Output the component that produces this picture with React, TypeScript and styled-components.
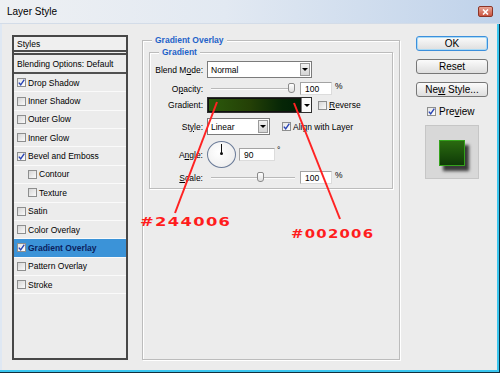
import React from "react";
import styled, { createGlobalStyle } from "styled-components";

const GlobalStyle = createGlobalStyle`
  html, body {
    margin: 0;
    padding: 0;
    background: #ececec;
  }
  body {
    font-family: "Liberation Sans", Arial, sans-serif;
    color: #000;
  }
`;

const styleItems = [
  { label: "Drop Shadow", on: true },
  { label: "Inner Shadow" },
  { label: "Outer Glow" },
  { label: "Inner Glow" },
  { label: "Bevel and Emboss", on: true },
  { label: "Contour", sub: true },
  { label: "Texture", sub: true },
  { label: "Satin" },
  { label: "Color Overlay" },
  { label: "Gradient Overlay", on: true, active: true },
  { label: "Pattern Overlay" },
  { label: "Stroke" },
];

function App() {
  return (
    <>
      <GlobalStyle />
      <Window>
        <TitleBar>
          <span>Layer Style</span>
          <CloseButton>
            <svg width="7" height="6" viewBox="0 0 7 6">
              <path d="M1 0.5 L6 5.5 M6 0.5 L1 5.5" stroke="#fff" strokeWidth="1.6" />
            </svg>
          </CloseButton>
        </TitleBar>

        <Body>
          <StylesPanel>
            <PanelHeader>Styles</PanelHeader>
            <BlendingRow>Blending Options: Default</BlendingRow>
            {styleItems.map((item) => (
              <StyleRow key={item.label} $sub={item.sub} $active={item.active}>
                <Check on={item.on} />
                <span>{item.label}</span>
              </StyleRow>
            ))}
          </StylesPanel>

          <OuterGroup>
            <Legend>Gradient Overlay</Legend>
            <InnerGroup>
              <Legend>Gradient</Legend>

              <FieldRow $h={17} $mt={3}>
                <FieldLabel>
                  Blend M<u>o</u>de:
                </FieldLabel>
                <Select $w={105}>
                  <span>Normal</span>
                  <DropArrow />
                </Select>
              </FieldRow>

              <FieldRow $h={13} $mt={4}>
                <FieldLabel>
                  O<u>p</u>acity:
                </FieldLabel>
                <Slider $w={92} $track={84} $pos={85} />
                <NumberBox $w={32}>100</NumberBox>
                <Unit>%</Unit>
              </FieldRow>

              <FieldRow $h={16} $mt={2}>
                <FieldLabel>Gradient:</FieldLabel>
                <GradientPicker>
                  <GradientBar />
                  <PickerArrow>
                    <Triangle />
                  </PickerArrow>
                </GradientPicker>
                <Option $ml={6}>
                  <Check />
                  <span>
                    <u>R</u>everse
                  </span>
                </Option>
              </FieldRow>

              <FieldRow $h={17} $mt={5}>
                <FieldLabel>
                  St<u>y</u>le:
                </FieldLabel>
                <Select $w={63}>
                  <span>Linear</span>
                  <DropArrow />
                </Select>
                <Option $ml={12}>
                  <Check on />
                  <span>
                    Ali<u>g</u>n with Layer
                  </span>
                </Option>
              </FieldRow>

              <FieldRow $h={27} $mt={6}>
                <FieldLabel>
                  A<u>n</u>gle:
                </FieldLabel>
                <Dial>
                  <DialHand />
                </Dial>
                <NumberBox $w={36} $ml={3}>
                  90
                </NumberBox>
                <Degree>°</Degree>
              </FieldRow>

              <FieldRow $h={13} $mt={3}>
                <FieldLabel>
                  <u>S</u>cale:
                </FieldLabel>
                <Slider $w={92} $track={84} $pos={54} />
                <NumberBox $w={32}>100</NumberBox>
                <Unit>%</Unit>
              </FieldRow>
            </InnerGroup>
          </OuterGroup>

          <Side>
            <DialogButton $focus>
              <span>OK</span>
            </DialogButton>
            <DialogButton>
              <span>Reset</span>
            </DialogButton>
            <DialogButton>
              <span>
                Ne<u>w</u> Style...
              </span>
            </DialogButton>
            <PreviewToggle>
              <Check on />
              <span>
                Pre<u>v</u>iew
              </span>
            </PreviewToggle>
            <PreviewBox>
              <Swatch />
            </PreviewBox>
          </Side>
        </Body>

        <Annotations width="500" height="373" viewBox="0 0 500 373">
          <line x1="217" y1="102" x2="175" y2="213" stroke="#ff2222" strokeWidth="2" />
          <line x1="294" y1="103" x2="340" y2="219" stroke="#ff2222" strokeWidth="2" />
        </Annotations>
        <HexNote $x={140} $y={216} $sx={1.36}>
          #244006
        </HexNote>
        <HexNote $x={291} $y={228} $sx={1.24}>
          #002006
        </HexNote>
      </Window>
    </>
  );
}

function Check({ on }: { on?: boolean }) {
  return (
    <CheckBox $on={on}>
      {on && (
        <svg width="7" height="7" viewBox="0 0 7 7">
          <path d="M0.8 3.6 L2.7 5.8 L6.3 0.6" stroke="#2a45b5" strokeWidth="1.4" fill="none" />
        </svg>
      )}
    </CheckBox>
  );
}

function DropArrow() {
  return (
    <ArrowButton>
      <Triangle />
    </ArrowButton>
  );
}

export default App;

const Window = styled.div`
  position: relative;
  width: 500px;
  height: 373px;
  background: #ececec;
  overflow: hidden;
  box-shadow: inset -1px -1px 0 #12303e, inset -3px -3px 0 #3ac6ef,
    inset 2px 0 0 #dfe8f3;
`;

const TitleBar = styled.div`
  height: 24px;
  display: flex;
  align-items: center;
  justify-content: space-between;
  padding: 0 7px;
  background: linear-gradient(to right, #eef0f3 0%, #e2e9f2 45%, #bfd2ea 100%);
  border-bottom: 1px solid #d3dce8;
  box-sizing: border-box;
  font-size: 10px;
`;

const CloseButton = styled.div`
  width: 15px;
  height: 11px;
  box-sizing: border-box;
  border: 1px solid #8c3527;
  border-radius: 2px;
  background: linear-gradient(#e9a595, #c9533f);
  display: flex;
  align-items: center;
  justify-content: center;
`;

const Body = styled.div`
  display: flex;
  align-items: flex-start;
  padding: 11px 0 0 12px;
`;

const StylesPanel = styled.div`
  width: 116px;
  height: 325px;
  box-sizing: border-box;
  border: 2px solid #474747;
  background: #ececec;
  display: flex;
  flex-direction: column;
  font-size: 8.5px;
`;

const PanelHeader = styled.div`
  height: 18px;
  box-sizing: border-box;
  padding-left: 3px;
  display: flex;
  align-items: center;
  background: #efefef;
  border-bottom: 5px double #4a4a4a;
`;

const BlendingRow = styled.div`
  height: 19px;
  box-sizing: border-box;
  padding-left: 3px;
  display: flex;
  align-items: center;
  border-bottom: 2px solid #505050;
`;

const StyleRow = styled.div<{ $sub?: boolean; $active?: boolean }>`
  height: 18.36px;
  box-sizing: border-box;
  flex: none;
  display: flex;
  align-items: center;
  gap: 2px;
  padding-left: ${(p) => (p.$sub ? 14 : 3)}px;
  border-bottom: 1px solid #fafafa;
  background: ${(p) => (p.$active ? "#3b93d8" : "transparent")};
  color: ${(p) => (p.$active ? "#0b1f5e" : "#000")};
  font-weight: ${(p) => (p.$active ? 700 : 400)};
`;

const CheckBox = styled.span<{ $on?: boolean }>`
  width: 9px;
  height: 9px;
  flex: none;
  box-sizing: border-box;
  border: 1px solid #8d8e8e;
  background: ${(p) =>
    p.$on
      ? "linear-gradient(135deg, #e6e6e6, #fdfdfd)"
      : "linear-gradient(135deg, #d6d6d6, #fafafa)"};
  display: inline-flex;
  align-items: center;
  justify-content: center;
`;

const OuterGroup = styled.fieldset`
  width: 258px;
  height: 326px;
  box-sizing: border-box;
  margin: -1px 0 0 14px;
  padding: 0;
  min-inline-size: 0;
  border: 1px solid #bcbcbc;
  box-shadow: 1px 1px 0 #fff, inset 1px 1px 0 #fff;
`;

const InnerGroup = styled.fieldset`
  margin: 0 6px;
  padding: 0 0 4px 0;
  min-inline-size: 0;
  border: 1px solid #bcbcbc;
  box-shadow: 1px 1px 0 #fff, inset 1px 1px 0 #fff;
`;

const Legend = styled.legend`
  margin-left: 9px;
  padding: 0 3px;
  background: #ececec;
  font-size: 8.5px;
  line-height: 12px;
  font-weight: 700;
  color: #1f63c9;
`;

const FieldRow = styled.div<{ $h: number; $mt: number }>`
  display: flex;
  align-items: center;
  height: ${(p) => p.$h}px;
  margin-top: ${(p) => p.$mt}px;
  font-size: 8.5px;
`;

const FieldLabel = styled.span`
  width: 53px;
  flex: none;
  text-align: right;
  margin-right: 4px;
`;

const Select = styled.div<{ $w: number }>`
  width: ${(p) => p.$w}px;
  height: 17px;
  box-sizing: border-box;
  border: 1px solid #7b7b7b;
  background: #fff;
  display: flex;
  align-items: center;
  justify-content: space-between;
  padding-left: 3px;
  font-size: 8.5px;
`;

const ArrowButton = styled.span`
  width: 10px;
  height: 13px;
  margin-right: 1px;
  box-sizing: border-box;
  border: 1px solid #9a9a9a;
  background: linear-gradient(#f2f2f2, #d4d4d4);
  display: flex;
  align-items: center;
  justify-content: center;
`;

const Triangle = styled.span`
  width: 0;
  height: 0;
  border-left: 3px solid transparent;
  border-right: 3px solid transparent;
  border-top: 3px solid #000;
`;

const Slider = styled.div<{ $w: number; $track: number; $pos: number }>`
  position: relative;
  width: ${(p) => p.$w}px;
  height: 13px;
  flex: none;

  &::before {
    content: "";
    position: absolute;
    left: 4px;
    top: 6px;
    width: ${(p) => p.$track}px;
    height: 2px;
    box-sizing: border-box;
    border-top: 1px solid #b9b9b9;
    border-bottom: 1px solid #fbfbfb;
  }

  &::after {
    content: "";
    position: absolute;
    left: ${(p) => p.$pos - 4}px;
    top: 1px;
    width: 7px;
    height: 10px;
    box-sizing: border-box;
    border: 1px solid #8a8a8a;
    border-radius: 2px 2px 3px 3px;
    background: linear-gradient(#ffffff, #dedede);
  }
`;

const NumberBox = styled.div<{ $w: number; $ml?: number }>`
  width: ${(p) => p.$w}px;
  height: 13px;
  margin-left: ${(p) => p.$ml ?? 1}px;
  box-sizing: border-box;
  border: 1px solid #a3a3a3;
  border-right-color: #dcdcdc;
  border-bottom-color: #dcdcdc;
  background: #fff;
  padding-left: 4px;
  display: flex;
  align-items: center;
  font-size: 8.5px;
`;

const Unit = styled.span`
  margin-left: 3px;
  align-self: flex-start;
  margin-top: -1px;
`;

const Degree = styled.span`
  margin-left: 2px;
  align-self: flex-start;
  margin-top: 4px;
`;

const GradientPicker = styled.div`
  width: 105px;
  height: 16px;
  box-sizing: border-box;
  border: 1px solid #2f2f2f;
  background: #fff;
  display: flex;
`;

const GradientBar = styled.div`
  flex: 1;
  border: 1px solid #111;
  background: linear-gradient(to right, #2c5a0c 0%, #244006 45%, #062606 80%, #002006 100%);
`;

const PickerArrow = styled.span`
  width: 9px;
  display: flex;
  align-items: center;
  justify-content: center;
  border-left: 1px solid #777;
  background: #fafafa;
`;

const Option = styled.span<{ $ml: number }>`
  display: flex;
  align-items: center;
  gap: 2px;
  margin-left: ${(p) => p.$ml}px;
`;

const Dial = styled.div`
  position: relative;
  width: 29px;
  height: 27px;
  flex: none;
  box-sizing: border-box;
  border: 1.5px solid #6a7b98;
  border-radius: 50%;
  background: radial-gradient(circle at 40% 40%, #ffffff, #e9e9e9);
`;

const DialHand = styled.span`
  position: absolute;
  left: 12.5px;
  top: 2px;
  width: 1px;
  height: 10px;
  background: #111;

  &::after {
    content: "";
    position: absolute;
    left: -1px;
    bottom: -1px;
    width: 3px;
    height: 3px;
    border-radius: 50%;
    background: #111;
  }
`;

const Side = styled.div`
  width: 72px;
  margin: 1px 0 0 16px;
  display: flex;
  flex-direction: column;
  align-items: center;
  gap: 8px;
`;

const DialogButton = styled.div<{ $focus?: boolean }>`
  width: 72px;
  height: 15px;
  box-sizing: border-box;
  border: 1px solid ${(p) => (p.$focus ? "#3c8fdc" : "#777")};
  border-radius: 3px;
  background: linear-gradient(#fbfbfb, #dedede);
  box-shadow: ${(p) => (p.$focus ? "inset 0 0 0 1px #a9daf6" : "none")};
  display: flex;
  align-items: center;
  justify-content: center;
  font-size: 10px;
`;

const PreviewToggle = styled.div`
  align-self: flex-start;
  margin-left: 11px;
  display: flex;
  align-items: center;
  gap: 3px;
  height: 12px;
  font-size: 10px;
`;

const PreviewBox = styled.div`
  width: 54px;
  height: 54px;
  box-sizing: border-box;
  border: 1px solid #c6c6c6;
  background: #d8d8d8;
  padding: 14px 0 0 13px;
`;

const Swatch = styled.div`
  width: 26px;
  height: 26px;
  box-sizing: border-box;
  border: 1px solid #34a21c;
  background: linear-gradient(#2a6a10, #0f3a07);
  box-shadow: 4px 5px 3px #3a3a3a;
`;

const Annotations = styled.svg`
  position: absolute;
  left: 0;
  top: 0;
  pointer-events: none;
`;

const HexNote = styled.span<{ $x: number; $y: number; $sx: number }>`
  position: absolute;
  left: ${(p) => p.$x}px;
  top: ${(p) => p.$y}px;
  font-family: "DejaVu Sans", sans-serif;
  font-weight: 700;
  font-size: 12px;
  line-height: 12px;
  letter-spacing: 1px;
  color: #ff1d1d;
  transform: scaleX(${(p) => p.$sx});
  transform-origin: left top;
  white-space: nowrap;
`;
